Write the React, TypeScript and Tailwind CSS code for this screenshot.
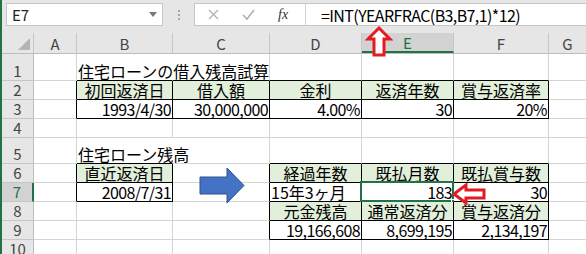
import React from "react";

type Align = "left" | "right" | "center";
type Cell = { text: string; align: Align; fill?: boolean; spill?: boolean };

const COLS = ["A", "B", "C", "D", "E", "F", "G"];
const COL_W = [43, 96, 97, 92, 92, 95, 0];
const ROW_H = [27, 19, 19, 19, 26, 19, 19, 19, 19, 19];

const cells: Record<string, Cell> = {
  B1: { text: "住宅ローンの借入残高試算", align: "left", spill: true },
  B2: { text: "初回返済日", align: "center", fill: true },
  C2: { text: "借入額", align: "center", fill: true },
  D2: { text: "金利", align: "center", fill: true },
  E2: { text: "返済年数", align: "center", fill: true },
  F2: { text: "賞与返済率", align: "center", fill: true },
  B3: { text: "1993/4/30", align: "right" },
  C3: { text: "30,000,000", align: "right" },
  D3: { text: "4.00%", align: "right" },
  E3: { text: "30", align: "right" },
  F3: { text: "20%", align: "right" },
  B5: { text: "住宅ローン残高", align: "left", spill: true },
  B6: { text: "直近返済日", align: "center", fill: true },
  B7: { text: "2008/7/31", align: "right" },
  D6: { text: "経過年数", align: "center", fill: true },
  E6: { text: "既払月数", align: "center", fill: true },
  F6: { text: "既払賞与数", align: "center", fill: true },
  D7: { text: "15年3ヶ月", align: "left" },
  E7: { text: "183", align: "right" },
  F7: { text: "30", align: "right" },
  D8: { text: "元金残高", align: "center", fill: true },
  E8: { text: "通常返済分", align: "center", fill: true },
  F8: { text: "賞与返済分", align: "center", fill: true },
  D9: { text: "19,166,608", align: "right" },
  E9: { text: "8,699,195", align: "right" },
  F9: { text: "2,134,197", align: "right" },
};

// ranges that carry black "all borders"
const boxed = (c: number, r: number) =>
  (c >= 1 && c <= 5 && r >= 2 && r <= 3) ||
  (c === 1 && r >= 6 && r <= 7) ||
  (c >= 3 && c <= 5 && r >= 6 && r <= 9);

const font = "font-['Noto_Sans_CJK_JP','Noto_Sans',sans-serif]";

const SheetCell = ({ c, r }: { c: number; r: number }) => {
  const key = COLS[c] + r;
  const cell = cells[key];
  const rightBlack = boxed(c, r) || boxed(c + 1, r);
  const bottomBlack = boxed(c, r) || boxed(c, r + 1);
  const last = c === COLS.length - 1;

  return (
    <div
      className={`relative flex items-end pb-[1px] shrink-0 border-b ${
        last ? "flex-1" : "border-r"
      } ${rightBlack ? "border-r-black" : cell?.spill ? "border-r-transparent" : "border-r-[#d4d4d4]"} ${
        bottomBlack ? "border-b-black" : "border-b-[#d4d4d4]"
      } ${cell?.fill ? "bg-[#e2efda]" : "bg-white"} ${cell?.spill ? "z-10" : ""} ${
        cell?.align === "right"
          ? "justify-end pr-[1px]"
          : cell?.align === "center"
          ? "justify-center"
          : "justify-start pl-[1px]"
      }`}
      style={last ? undefined : { width: COL_W[c] }}
    >
      {cell && (
        <span
          className={`whitespace-nowrap text-[16px] leading-[16px] text-black ${
            /^[0-9,./%]+$/.test(cell.text) ? "tracking-[-0.6px]" : ""
          }`}
        >
          {cell.text}
        </span>
      )}
      {key === "E7" && (
        <>
          <div className="absolute left-[-2px] top-[-2px] right-[-1px] bottom-[-1px] border-2 border-[#217346] pointer-events-none" />
          <div className="absolute right-[-4px] bottom-[-4px] w-[6px] h-[6px] bg-[#217346] border border-white" />
        </>
      )}
    </div>
  );
};

export default function App() {
  return (
    <div className={`relative w-[586px] h-[254px] overflow-hidden flex bg-[#e6e6e6] ${font}`}>
      <div className="w-[2px] shrink-0 bg-[#217346]" />
      <div className="flex-1 flex flex-col min-w-0">
        {/* formula bar */}
        <div className="h-[33px] shrink-0 flex items-start pt-[3px]">
          <div className="ml-[4px] w-[157px] h-[23px] bg-white border border-[#c6c6c6] flex items-center justify-between pl-[5px] pr-[5px]">
            <span className="text-[15px] leading-none text-[#222]">E7</span>
            <svg width="8" height="5" viewBox="0 0 8 5">
              <polygon points="0,0 8,0 4,5" fill="#7a7a7a" />
            </svg>
          </div>
          <div className="w-[31px] h-[23px] flex flex-col items-center justify-center gap-[2px]">
            <span className="w-[2px] h-[2px] bg-[#a8a8a8]" />
            <span className="w-[2px] h-[2px] bg-[#a8a8a8]" />
            <span className="w-[2px] h-[2px] bg-[#a8a8a8]" />
          </div>
          <div className="flex-1 h-[23px] bg-white border border-r-0 border-[#c6c6c6] flex items-center">
            <div className="w-[111px] h-full flex items-center border-r border-[#d4d4d4]">
              <svg className="ml-[13px]" width="11" height="11" viewBox="0 0 11 11">
                <path d="M1 1 L10 10 M10 1 L1 10" stroke="#b0b0b0" strokeWidth="1.3" />
              </svg>
              <svg className="ml-[23px]" width="13" height="11" viewBox="0 0 13 11">
                <path d="M1 6 L5 10 L12 1" stroke="#b0b0b0" strokeWidth="1.6" fill="none" />
              </svg>
              <span className="ml-[23px] text-[14px] italic leading-none text-[#333] font-['Liberation_Serif',serif]">
                fx
              </span>
            </div>
            <span className="ml-[15px] text-[16px] leading-none text-black tracking-[-0.6px]">
              =INT(YEARFRAC(B3,B7,1)*12)
            </span>
          </div>
        </div>

        {/* column headers */}
        <div className="h-[21px] shrink-0 flex border-b border-[#bdbdbd] bg-[#e6e6e6]">
          <div className="w-[32px] shrink-0 relative border-r border-[#c6c6c6]">
            <svg className="absolute right-[3px] bottom-[3px]" width="12" height="12" viewBox="0 0 12 12">
              <polygon points="12,0 12,12 0,12" fill="#b4b4b4" />
            </svg>
          </div>
          {COLS.map((col, c) => (
            <div
              key={col}
              className={`shrink-0 flex items-center justify-center text-[15px] leading-none ${
                c === COLS.length - 1 ? "flex-1" : "border-r border-[#c6c6c6]"
              } ${col === "E" ? "bg-[#d2d2d2] text-[#217346] border-b-2 border-b-[#217346]" : "text-[#444]"}`}
              style={c === COLS.length - 1 ? undefined : { width: COL_W[c] }}
            >
              {col}
            </div>
          ))}
        </div>

        {/* rows */}
        {ROW_H.map((h, i) => {
          const r = i + 1;
          return (
            <div key={r} className="flex shrink-0" style={{ height: h }}>
              <div
                className={`w-[32px] shrink-0 flex items-end justify-center pb-[1px] text-[15px] leading-[16px] border-b border-[#c6c6c6] ${
                  r === 7
                    ? "bg-[#d2d2d2] text-[#217346] border-r-2 border-r-[#217346]"
                    : "bg-[#e6e6e6] text-[#444] border-r border-r-[#bdbdbd]"
                }`}
              >
                {r}
              </div>
              {COLS.map((_, c) => (
                <SheetCell key={c} c={c} r={r} />
              ))}
            </div>
          );
        })}
      </div>

      {/* blue block arrow */}
      <svg className="absolute left-[199px] top-[167px]" width="48" height="38" viewBox="0 0 48 38">
        <polygon points="1,10 28,10 28,1 45,18.5 28,36 28,27 1,27" fill="#4472c4" stroke="#2f528f" strokeWidth="1" />
      </svg>

      {/* red outline arrows */}
      <svg className="absolute left-[365px] top-[26px]" width="28" height="31" viewBox="0 0 28 31">
        <polygon points="14,2 25,13 19,13 19,29 9,29 9,13 3,13" fill="#fff" stroke="#e31b23" strokeWidth="3" strokeLinejoin="miter" />
      </svg>
      <svg className="absolute left-[452px] top-[183px]" width="34" height="22" viewBox="0 0 34 22">
        <polygon points="2,11 14,2 14,7 32,7 32,15 14,15 14,20" fill="#fff" stroke="#e31b23" strokeWidth="3" strokeLinejoin="miter" />
      </svg>
    </div>
  );
}
